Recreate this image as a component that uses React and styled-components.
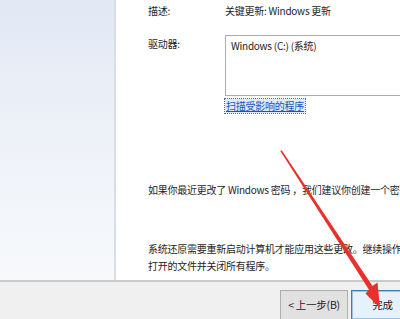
import React from 'react'
import styled, { createGlobalStyle } from 'styled-components'

const Global = createGlobalStyle`
html, body {
    margin: 0;
    padding: 0;
    background: #ffffff;
}
body{
    font-family: "Noto Sans CJK SC", "Noto Sans", "Liberation Sans", sans-serif;
}
`;

const Wizard = styled.div`
position: relative;
width: 400px;
height: 319px;
overflow: hidden;
display: flex;
flex-direction: column;
font-size: 10px;
letter-spacing: -0.25px;
color: #1e1e1e;
`;

const Body = styled.div`
display: flex;
height: 280px;
flex-shrink: 0;
`;

const Sidebar = styled.div`
width: 114px;
flex-shrink: 0;
background: linear-gradient(180deg, #e1e8f4 0%, #edf1f8 45%, #f7f9fb 100%);
border-right: 2px solid #dadee4;
`;

const Content = styled.div`
flex: 1;
min-width: 0;
padding: 3px 0 0 32px;
white-space: nowrap;
overflow: hidden;
`;

const Field = styled.div`
display: grid;
grid-template-columns: 77px 1fr;
align-items: start;
margin-bottom: ${p => p.gap || 0}px;
`;

const Label = styled.div`
line-height: 16px;
padding-top: ${p => p.top || 0}px;
`;

const Value = styled.div`
line-height: 16px;
`;

const ListBox = styled.div`
width: 200px;
height: 61px;
border: 1px solid #a9acb2;
background: #fff;
padding: 2px 5px;
line-height: 16px;
box-sizing: border-box;
`;

const LinkText = styled.span`
display: inline-block;
margin-top: 3px;
margin-left: 77px;
color: #1a56b8;
text-decoration: underline;
outline: 1px dotted #4a6aa0;
background: #dfe9f7;
line-height: 14px;
padding: 0 1px;
`;

const Para = styled.p`
margin: ${p => p.top}px 0 0;
line-height: 17px;
`;

const Footer = styled.div`
flex: 1;
border-top: 2px solid #cbcbcb;
background: #f0f0f0;
display: flex;
justify-content: flex-end;
align-items: flex-start;
padding-top: 8px;
gap: 3px;
margin-right: -14px;
`;

const Button = styled.div`
flex-shrink: 0;
box-sizing: border-box;
width: ${p => p.w}px;
height: 30px;
display: flex;
justify-content: center;
padding-top: 6px;
font-size: 10.5px;
color: #222;
background: ${p => p.primary ? '#e5f1fb' : '#e1e1e1'};
border: 1px solid ${p => p.primary ? '#3c7fb1' : '#adadad'};
box-shadow: ${p => p.primary ? 'inset 0 0 0 1px #9cc4e6' : 'none'};
`;

const Arrow = styled.svg`
position: absolute;
left: 0;
top: 0;
pointer-events: none;
`;

const App = () => {
    return (
        <Wizard>
            <Global />
            <Body>
                <Sidebar />
                <Content>
                    <Field gap={16}>
                        <Label>描述:</Label>
                        <Value>关键更新: Windows 更新</Value>
                    </Field>
                    <Field>
                        <Label top={1}>驱动器:</Label>
                        <ListBox>Windows (C:) (系统)</ListBox>
                    </Field>
                    <LinkText>扫描受影响的程序</LinkText>
                    <Para top={68}>如果你最近更改了 Windows 密码 ，我们建议你创建一个密码重置盘。</Para>
                    <Para top={42}>
                        系统还原需要重新启动计算机才能应用这些更改。继续操作之前，请保存所有
                        <br />
                        打开的文件并关闭所有程序。
                    </Para>
                </Content>
            </Body>
            <Footer>
                <Button w={68}>&lt; 上一步(B)</Button>
                <Button w={63} primary>完成</Button>
            </Footer>
            <Arrow width="400" height="319" viewBox="0 0 400 319">
                <polygon
                    points="280.3,151 281.7,150.3 372.5,286 377.5,282.5 380,308 365.5,293.5 369,289.8"
                    fill="#e8302d"
                />
            </Arrow>
        </Wizard>
    );
}

export default App;
